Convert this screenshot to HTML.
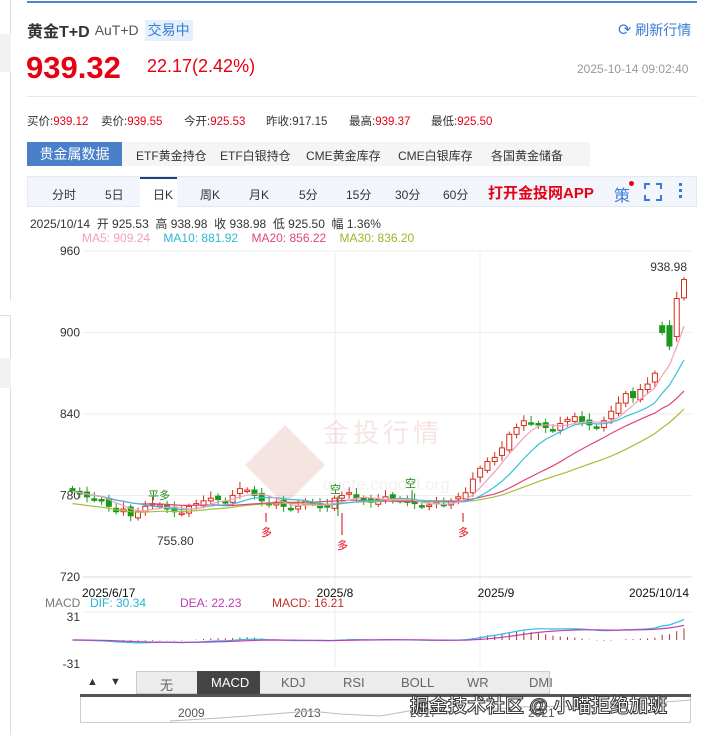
<!DOCTYPE html>
<html><head><meta charset="utf-8"><style>
*{margin:0;padding:0;box-sizing:border-box}
body{width:704px;height:734px;background:#fff;font-family:"Liberation Sans","Noto Sans CJK SC",sans-serif;position:relative;overflow:hidden;color:#333}
.a{position:absolute;white-space:nowrap}
.r{color:#e60012}
</style></head><body>
<div class="a" style="left:0;top:0;width:11px;height:300px;border-right:1px solid #ddd"></div>
<div class="a" style="left:0;top:34px;width:11px;height:38px;background:#f2f2f2"></div>
<div class="a" style="left:0;top:315px;width:11px;height:420px;border-right:1px solid #ddd;border-top:1px solid #ddd"></div>
<div class="a" style="left:0;top:358px;width:11px;height:30px;background:#f2f2f2"></div>
<div class="a" style="left:27px;top:1px;width:670px;height:2px;background:#4f86c6"></div>
<div class="a" style="left:27px;top:18px;display:flex;align-items:center">
<span style="font-size:16px;font-weight:bold;color:#333">黄金T+D</span>
<span style="font-size:14px;color:#555;margin-left:5px">AuT+D</span>
<span style="margin-left:6px;padding:0 3px;height:21px;background:#e4f0fb;color:#3a7bd5;font-size:14px;line-height:21px">交易中</span></div>
<div class="a" style="left:618px;top:20px;font-size:14px;color:#3a7bd5"><span style="font-size:16px">⟳</span> 刷新行情</div>
<div class="a r" style="left:26px;top:50px;font-size:31px;font-weight:bold">939.32</div>
<div class="a r" style="left:147px;top:56px;font-size:18px">22.17(2.42%)</div>
<div class="a" style="left:577px;top:62px;font-size:12px;color:#999">2025-10-14 09:02:40</div>
<div class="a" style="left:27px;top:96px;width:670px;height:1px;background:#e6e6e6"></div>
<div class="a" style="left:27px;top:113px;font-size:11.5px;color:#333">买价:<span class="r">939.12</span></div>
<div class="a" style="left:101px;top:113px;font-size:11.5px">卖价:<span class="r">939.55</span></div>
<div class="a" style="left:184px;top:113px;font-size:11.5px">今开:<span class="r">925.53</span></div>
<div class="a" style="left:266px;top:113px;font-size:11.5px">昨收:917.15</div>
<div class="a" style="left:349px;top:113px;font-size:11.5px">最高:<span class="r">939.37</span></div>
<div class="a" style="left:431px;top:113px;font-size:11.5px">最低:<span class="r">925.50</span></div>
<div class="a" style="left:27px;top:142px;width:563px;height:24px;background:#f5f5f5"></div>
<div class="a" style="left:27px;top:142px;width:95px;height:24px;background:#4a7fc9;color:#fff;font-size:14px;line-height:24px;text-align:center">贵金属数据</div>
<div class="a" style="left:136px;top:147px;font-size:12px">ETF黄金持仓</div>
<div class="a" style="left:220px;top:147px;font-size:12px">ETF白银持仓</div>
<div class="a" style="left:306px;top:147px;font-size:12px">CME黄金库存</div>
<div class="a" style="left:398px;top:147px;font-size:12px">CME白银库存</div>
<div class="a" style="left:491px;top:147px;font-size:12px">各国黄金储备</div>
<div class="a" style="left:27px;top:176px;width:670px;height:31px;background:#f2f6fc;border:1px solid #e3e9f2"></div>
<div class="a" style="left:140px;top:177px;width:37px;height:30px;background:#fff;border-top:2px solid #1f3f7a"></div>
<div class="a" style="left:52px;top:186px;font-size:12px;color:#333">分时</div>
<div class="a" style="left:105px;top:186px;font-size:12px">5日</div>
<div class="a" style="left:153px;top:186px;font-size:12px">日K</div>
<div class="a" style="left:200px;top:186px;font-size:12px">周K</div>
<div class="a" style="left:249px;top:186px;font-size:12px">月K</div>
<div class="a" style="left:299px;top:186px;font-size:12px">5分</div>
<div class="a" style="left:346px;top:186px;font-size:12px">15分</div>
<div class="a" style="left:395px;top:186px;font-size:12px">30分</div>
<div class="a" style="left:443px;top:186px;font-size:12px">60分</div>
<div class="a" style="left:488px;top:182px;font-size:15px;font-weight:bold;color:#e60012">打开金投网APP</div>
<div class="a" style="left:614px;top:182px;font-size:16px;color:#3a7bd5">策</div>
<div class="a" style="left:629px;top:181px;width:5px;height:5px;border-radius:50%;background:#e60012"></div>
<svg class="a" style="left:644px;top:183px" width="18" height="18"><path d="M1 6V1H6M12 1H17V6M17 12V17H12M6 17H1V12" fill="none" stroke="#3a7bd5" stroke-width="2"/></svg>
<div class="a" style="left:679px;top:183px;width:3px;height:3px;background:#3a7bd5;box-shadow:0 6px 0 #3a7bd5,0 12px 0 #3a7bd5"></div>
<div class="a" style="left:30px;top:215px;font-size:12px;color:#333">2025/10/14 &nbsp;开 925.53 &nbsp;高 938.98 &nbsp;收 938.98 &nbsp;低 925.50 &nbsp;幅 1.36%</div>
<div class="a" style="left:82px;top:231px;font-size:12px"><span style="color:#f4a0b8">MA5: 909.24</span> &nbsp;&nbsp;&nbsp;<span style="color:#2fb8d4">MA10: 881.92</span> &nbsp;&nbsp;&nbsp;<span style="color:#e0457b">MA20: 856.22</span> &nbsp;&nbsp;&nbsp;<span style="color:#9cb52a">MA30: 836.20</span></div>
<svg id="ch" class="a" style="left:0;top:240px" width="704" height="494" font-family="Liberation Sans, Noto Sans CJK SC, sans-serif"></svg>
<div class="a" style="left:80px;top:671px;width:611px;height:23px;background:#fff"></div>
<div class="a" style="left:136px;top:671px;width:414px;height:23px;background:#ececec;border:1px solid #ccc"></div>
<div class="a" style="left:197px;top:671px;width:63px;height:23px;background:#444"></div>
<div class="a" style="left:87px;top:676px;font-size:11px">▲</div>
<div class="a" style="left:110px;top:676px;font-size:11px">▼</div>
<div class="a" style="left:160px;top:675px;font-size:13px;color:#666">无</div>
<div class="a" style="left:211px;top:675px;font-size:13px;color:#fff">MACD</div>
<div class="a" style="left:281px;top:675px;font-size:13px;color:#666">KDJ</div>
<div class="a" style="left:343px;top:675px;font-size:13px;color:#666">RSI</div>
<div class="a" style="left:401px;top:675px;font-size:13px;color:#666">BOLL</div>
<div class="a" style="left:467px;top:675px;font-size:13px;color:#666">WR</div>
<div class="a" style="left:529px;top:675px;font-size:13px;color:#666">DMI</div>
<div class="a" style="left:80px;top:694px;width:611px;height:3px;background:#555"></div>
<div class="a" style="left:80px;top:697px;width:611px;height:26px;border:1px solid #ccc;border-top:0"></div>
<div class="a" style="left:178px;top:706px;font-size:12px;color:#555">2009</div>
<div class="a" style="left:294px;top:706px;font-size:12px;color:#555">2013</div>
<div class="a" style="left:410px;top:706px;font-size:12px;color:#555">2017</div>
<div class="a" style="left:528px;top:706px;font-size:12px;color:#555">2021</div>
<svg class="a" style="left:80px;top:697px" width="611" height="26"><path d="M90 24L140 21L180 18L230 14L260 17L300 19L340 12L380 15L440 10L500 9L560 7L611 3" fill="none" stroke="#bbb"/></svg>
<div class="a" style="left:410px;top:691px;font-size:19px;color:#fff;-webkit-text-stroke:1px #333;font-weight:bold">掘金技术社区 @ 小喵拒绝加班</div>
<script>
var s=document.getElementById('ch'),h='';
function Y(p){return 251+(960-p)*1.358-240}
[960,900,840,780,720].forEach(function(p){var y=Y(p);h+='<line x1="83" x2="692" y1="'+y+'" y2="'+y+'" stroke="#eee"/>';h+='<text x="80" y="'+(y+4)+'" font-size="12" fill="#333" text-anchor="end">'+p+'</text>';});
[335,480].forEach(function(x){h+='<line x1="'+x+'" x2="'+x+'" y1="11" y2="428" stroke="#eee"/>'});
h+='<line x1="83" x2="692" y1="337" y2="337" stroke="#ddd"/>';
h+='<g opacity="0.13"><path d="M285 185L325 225L285 265L245 225Z" fill="#c0392b"/><text x="323" y="202" font-size="26" fill="#c0392b" letter-spacing="4">金投行情</text><text x="323" y="250" font-size="17" fill="#999">quote.cngold.org</text></g>';
var cl=[783,781,779,777,776,772,768,770,765,768,772,774,773,770,768,767,772,774,776,778,777,775,780,785,784,780,776,773,775,772,770,772,776,774,771,772,778,780,782,778,776,775,777,779,778,776,775,774,772,773,775,773,776,779,782,792,800,805,808,815,825,830,835,833,832,830,828,833,836,838,834,832,830,835,842,848,855,852,858,862,870,900,890,925,938.98];
var n=cl.length,st=7.28,x0=684-(n-1)*st,op=[];
for(var i=0;i<n;i++){var o=i?cl[i-1]+((i%3)-1)*1.5:785;op.push(o)}
op[n-4]=905;op[n-3]=905;op[n-2]=897;op[n-1]=925.53;
for(i=0;i<n;i++){var x=x0+i*st,o=op[i],c=cl[i],up=c>=o,col=up?'#d62c1a':'#1a9a1a',hi=Math.max(o,c)+2+(i%4),lo=Math.min(o,c)-2-(i%3);
h+='<line x1="'+x+'" x2="'+x+'" y1="'+Y(hi)+'" y2="'+Y(lo)+'" stroke="'+col+'"/>';
var t=Y(Math.max(o,c)),hh=Math.max(1.5,Math.abs(Y(o)-Y(c)));
h+='<rect x="'+(x-2.5)+'" y="'+t+'" width="5" height="'+hh+'" fill="'+(up?'#fff':col)+'" stroke="'+col+'"/>';}
function ma(k,col){var p='';for(var i=0;i<n;i++){var a=0,m=0;for(var j=Math.max(0,i-k+1);j<=i;j++){a+=cl[j];m++}p+=(i?'L':'M')+(x0+i*st).toFixed(1)+' '+Y(a/m+(k==30&&i<30?-(30-i)*0.3:0)).toFixed(1)}h+='<path d="'+p+'" fill="none" stroke="'+col+'" stroke-width="1.2"/>';}
ma(30,'#a8bd3a');ma(20,'#e0457b');ma(10,'#38c0dc');ma(5,'#f4a0b8');
h+='<text x="687" y="31" font-size="12" text-anchor="end" fill="#333">938.98</text>';
h+='<text x="157" y="305" font-size="12" fill="#333">755.80</text>';
h+='<text x="148" y="259" font-size="11" fill="#1a8a1a">平多</text><text x="330" y="253" font-size="11" fill="#1a8a1a">空</text><text x="405" y="247" font-size="11" fill="#1a8a1a">空</text>';
h+='<line x1="412" x2="412" y1="250" y2="262" stroke="#1a8a1a"/><line x1="338" x2="338" y1="256" y2="276" stroke="#1a8a1a"/>';
[[266,272],[342,285],[463,272]].forEach(function(a){h+='<line x1="'+a[0]+'" x2="'+a[0]+'" y1="273" y2="'+(a[1]+10)+'" stroke="#e60012"/><text x="'+(a[0]-5)+'" y="'+(a[1]+24)+'" font-size="11" fill="#e60012">多</text>'});
[['2025/6/17',82,'start'],['2025/8',335,'middle'],['2025/9',496,'middle'],['2025/10/14',689,'end']].forEach(function(d){h+='<text x="'+d[1]+'" y="357" font-size="12" fill="#111" text-anchor="'+d[2]+'">'+d[0]+'</text>'});
h+='<text x="45" y="367" font-size="12" fill="#777">MACD</text><text x="90" y="367" font-size="12" fill="#28b4d8">DIF: 30.34</text><text x="180" y="367" font-size="12" fill="#c03cb8">DEA: 22.23</text><text x="272" y="367" font-size="12" fill="#c0302a">MACD: 16.21</text>';
h+='<line x1="83" x2="692" y1="372" y2="372" stroke="#eee"/><text x="80" y="381" font-size="12" text-anchor="end" fill="#333">31</text><text x="80" y="428" font-size="12" text-anchor="end" fill="#333">-31</text>';
var e12=cl[0],e26=cl[0],dea=0,pd='',pe='',zy=400,sc=0.75;
for(i=0;i<n;i++){e12=e12+(cl[i]-e12)*2/13;e26=e26+(cl[i]-e26)*2/27;var dif=e12-e26;dea=dea+(dif-dea)*0.2;var b=(dif-dea)*2,x=x0+i*st;
h+='<line x1="'+x+'" x2="'+x+'" y1="'+zy+'" y2="'+(zy-b*sc)+'" stroke="'+(b>=0?'#b03020':'#30b0b8')+'"/>';
pd+=(i?'L':'M')+x.toFixed(1)+' '+(zy-dif*sc).toFixed(1);pe+=(i?'L':'M')+x.toFixed(1)+' '+(zy-dea*sc).toFixed(1);}
h+='<path d="'+pd+'" fill="none" stroke="#28c0dc" stroke-width="1.2"/><path d="'+pe+'" fill="none" stroke="#c03cb8" stroke-width="1.2"/>';
s.innerHTML=h;
</script>
</body></html>
